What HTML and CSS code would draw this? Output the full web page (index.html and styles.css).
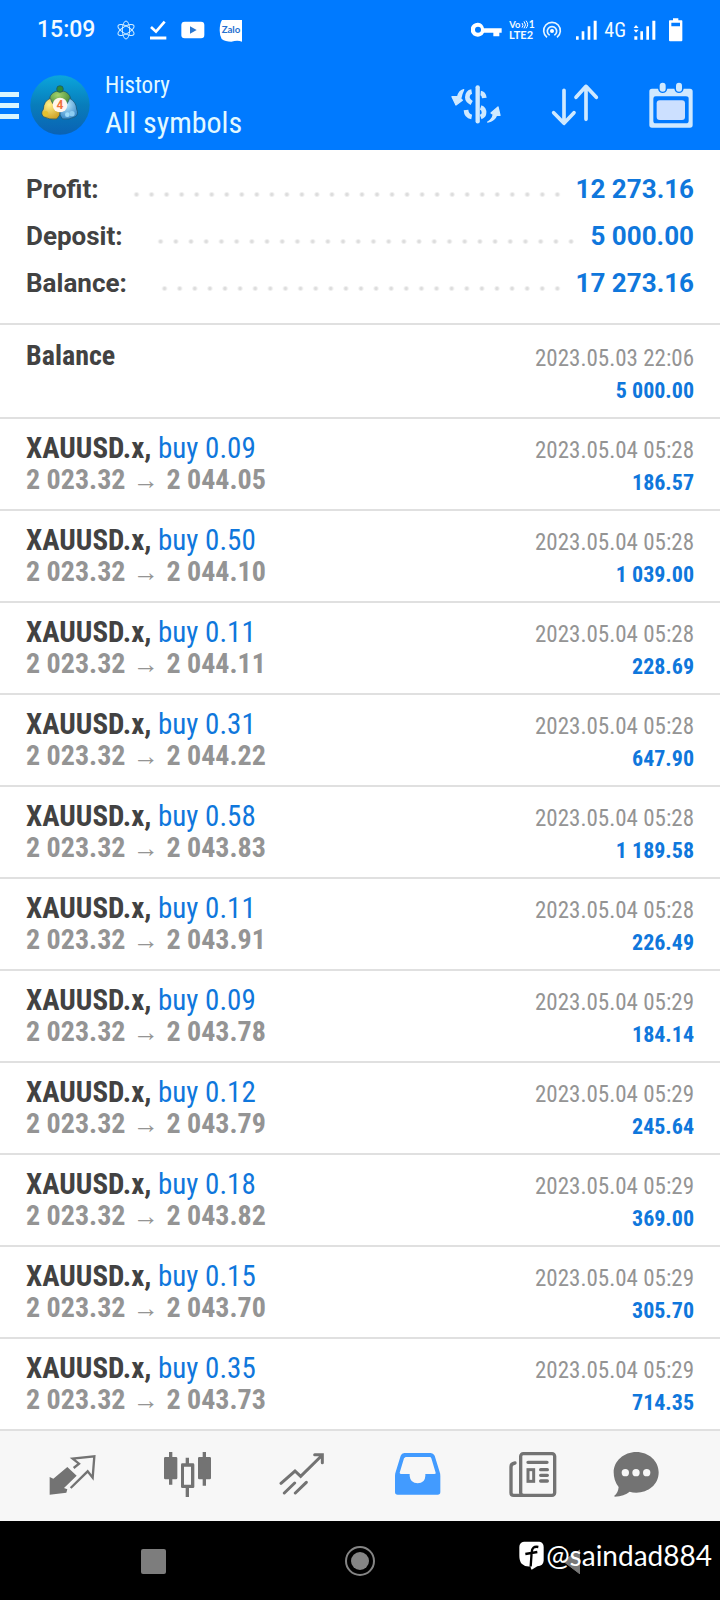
FILE: index.html
```html
<!DOCTYPE html>
<html lang="en">
<head>
<meta charset="utf-8">
<meta name="viewport" content="width=device-width, initial-scale=1">
<title>History</title>
<link rel="stylesheet" href="styles.css">
</head>
<body>
<div class="screen">
  <div class="status">
    <span class="clock">15:09</span>
    <div class="notices">
      <svg width="18" height="20" viewBox="351 58 54 60" fill="none" stroke="#d4efff" stroke-width="3"><ellipse cx="378" cy="88" rx="11" ry="27"/><ellipse cx="378" cy="88" rx="11" ry="27" transform="rotate(60 378 88)"/><ellipse cx="378" cy="88" rx="11" ry="27" transform="rotate(120 378 88)"/></svg>
      <svg width="18" height="20" viewBox="455 58 54 60" fill="none" stroke="#fff"><path d="M461 79L476 93L502 63" stroke-width="8"/><path d="M458 112H507" stroke-width="9"/></svg>
      <svg width="24" height="18" viewBox="551 61 72 54"><rect x="552" y="63" width="69" height="50" rx="10" fill="#fff"/><path d="M578 77L598 88L578 99Z" fill="#2b78d0"/></svg>
      <svg width="24" height="23" viewBox="659 52 72 69"><path d="M668 55H728V120Q715 114 696 120Q678 120 667 112Q661 103 661 86Q661 66 668 55Z" fill="#fff"/><text x="695" y="95" font-size="29" text-anchor="middle" class="zalo">Zalo</text></svg>
    </div>
    <div class="signals">
      <svg width="31" height="16" viewBox="127 66 93 48"><path fill="#fff" fill-rule="evenodd" d="M148 68a21 21 0 1 0 18 30H194V109H212V98H219V85H166A21 21 0 0 0 148 68ZM148 80a9 9 0 1 1 0 18a9 9 0 0 1 0-18Z"/></svg>
      <svg width="26" height="22" viewBox="241 56 78 66" class="volte"><text x="242" y="83" font-size="28">Vo</text><text x="300" y="83" font-size="31">1</text><text x="241" y="117" font-size="33">LTE2</text><path d="M280 68q6 7 0 14M286 63q9 11 0 21M292 61q10 12 0 23" fill="none" stroke="#fff" stroke-width="3"/></svg>
      <svg width="20" height="20" viewBox="338 60 60 60" fill="none" stroke="#e6f5ff" stroke-width="5"><circle cx="368" cy="93" r="6" fill="#fff" stroke="none"/><path d="M361 106a14 14 0 1 1 14 0M353 112a25 25 0 1 1 30 0"/></svg>
      <svg class="bars" width="22" height="21" viewBox="439 58 66 63" fill="#fff"><path d="M442 107h8v10h-8zM459 92h8v25h-8zM477 77h8v40h-8zM495 60h9v57h-9z"/></svg>
      <span class="net">4G</span>
      <svg width="23" height="21" viewBox="611 58 69 63" fill="#fff"><path d="M615 107h9v10h-9zM633 92h8v25h-8zM651 77h8v40h-8zM669 60h9v57h-9zM613 82l7-9 8 9zM613 87l7 9 8-9z"/></svg>
      <svg class="battery" width="15" height="24" viewBox="714 53 45 72"><path fill="#fff" fill-rule="evenodd" d="M729 54h16v6h10q2 0 2 2v58q0 3-3 3h-34q-3 0-3-3v-58q0-2 2-2h10zM724 67v11h26v-11z"/></svg>
    </div>
  </div>

  <header class="bar">
    <button class="menu" aria-label="Menu"><span></span><span></span><span></span></button>
    <svg class="logo" width="60" height="62" viewBox="90 222 180 186">
      <defs>
        <linearGradient id="disc" x1="0" y1="0" x2="0" y2="1"><stop offset="0" stop-color="#0ba6dc"/><stop offset=".5" stop-color="#087dbb"/><stop offset="1" stop-color="#0a62b4"/></linearGradient>
        <radialGradient id="green" cx=".4" cy=".3" r=".8"><stop offset="0" stop-color="#a5d36c"/><stop offset="1" stop-color="#2f7a30"/></radialGradient>
        <radialGradient id="gold" cx=".4" cy=".3" r=".8"><stop offset="0" stop-color="#fff08a"/><stop offset="1" stop-color="#c99a1c"/></radialGradient>
        <radialGradient id="blue" cx=".4" cy=".3" r=".8"><stop offset="0" stop-color="#b6e6fb"/><stop offset="1" stop-color="#2b7fc4"/></radialGradient>
      </defs>
      <circle cx="180" cy="315" r="89" fill="url(#disc)"/>
      <g stroke="#17506a" stroke-width="2">
        <path d="M148 308Q146 283 165 275Q180 268 196 275Q214 283 213 308Q196 318 180 318Q163 318 148 308Z" fill="url(#green)"/>
        <path d="M151 295Q131 303 130 328Q120 340 130 350Q148 360 170 357Q184 346 180 330Q158 318 151 295Z" fill="url(#gold)"/>
        <path d="M209 295Q229 306 230 328Q237 343 226 350Q208 360 187 357Q176 346 181 331Q200 320 209 295Z" fill="url(#blue)"/>
        <circle cx="180" cy="267" r="10" fill="#2f8a38"/>
      </g>
      <circle cx="137" cy="341" r="8" fill="#e5c22e"/>
      <circle cx="202" cy="344" r="7" fill="#9fdcfa"/>
      <circle cx="216" cy="341" r="8" fill="#8ccdf2"/>
      <circle cx="180" cy="315" r="22" fill="#fff5ee"/>
      <text x="180" y="328" text-anchor="middle" font-size="36" class="four">4</text>
    </svg>
    <div class="titles">
      <div class="sub">History</div>
      <h1>All symbols</h1>
    </div>
    <div class="actions">
      <button aria-label="Symbols"><svg width="52" height="44" viewBox="64 248 156 132" fill="none" stroke="#cfe9ff"><path d="M147 261V363" stroke-width="13" stroke-linecap="round"/><path d="M129 274Q117 276 116 291Q116 301 129 308M156 278Q165 279 167 293M112 329Q113 347 129 350M156 321Q167 325 166 338Q166 346 156 350" stroke-width="14"/><path d="M105 268C94 271 89 280 87 289L70 289L82 314L101 300L96 295Q98 282 105 268ZM177 365Q191 358 194 342L187 338L208 320L214 345L204 344Q198 361 177 365Z" fill="#cfe9ff" stroke-width="4" stroke-linejoin="round"/></svg></button>
      <button aria-label="Sort"><svg width="52" height="44" viewBox="354 248 156 132" fill="none" stroke="#cfe9ff" stroke-width="11" stroke-linecap="round" stroke-linejoin="round"><path d="M399 270V369M368 337L399 369L429 337M465 357V258M435 291L465 258L496 291"/></svg></button>
      <button aria-label="Period"><svg width="46" height="46" viewBox="655 244 138 138"><path fill="#cfe9ff" fill-rule="evenodd" d="M667 264H685Q688 277 699 277Q710 277 713 264H734Q737 277 748 277Q759 277 762 264H781Q789 264 789 272V373Q789 381 781 381H667Q659 381 659 373V272Q659 264 667 264ZM678 287Q671 287 671 294V360Q671 368 678 368H769Q777 368 777 360V294Q777 287 769 287Z"/><rect x="690" y="246" width="18" height="27" rx="9" fill="#cfe9ff"/><rect x="739" y="246" width="18" height="27" rx="9" fill="#cfe9ff"/><rect x="681" y="299" width="85" height="59" rx="9" fill="#cce0ff"/></svg></button>
    </div>
  </header>

  <main class="content">
    <dl class="summary">
      <div class="total"><dt>Profit:</dt><dd>12 273.16</dd></div>
      <div class="total"><dt>Deposit:</dt><dd>5 000.00</dd></div>
      <div class="total"><dt>Balance:</dt><dd>17 273.16</dd></div>
    </dl>
    <ul class="deals">
      <li class="deal opening"><div><div class="name">Balance</div></div><div class="side"><time>2023.05.03 22:06</time><div class="gain">5 000.00</div></div></li>
      <li class="deal"><div><div class="name">XAUUSD.x, <span class="buy">buy 0.09</span></div><div class="prices">2 023.32 <span class="arrow">→</span> 2 044.05</div></div><div class="side"><time>2023.05.04 05:28</time><div class="gain">186.57</div></div></li>
      <li class="deal"><div><div class="name">XAUUSD.x, <span class="buy">buy 0.50</span></div><div class="prices">2 023.32 <span class="arrow">→</span> 2 044.10</div></div><div class="side"><time>2023.05.04 05:28</time><div class="gain">1 039.00</div></div></li>
      <li class="deal"><div><div class="name">XAUUSD.x, <span class="buy">buy 0.11</span></div><div class="prices">2 023.32 <span class="arrow">→</span> 2 044.11</div></div><div class="side"><time>2023.05.04 05:28</time><div class="gain">228.69</div></div></li>
      <li class="deal"><div><div class="name">XAUUSD.x, <span class="buy">buy 0.31</span></div><div class="prices">2 023.32 <span class="arrow">→</span> 2 044.22</div></div><div class="side"><time>2023.05.04 05:28</time><div class="gain">647.90</div></div></li>
      <li class="deal"><div><div class="name">XAUUSD.x, <span class="buy">buy 0.58</span></div><div class="prices">2 023.32 <span class="arrow">→</span> 2 043.83</div></div><div class="side"><time>2023.05.04 05:28</time><div class="gain">1 189.58</div></div></li>
      <li class="deal"><div><div class="name">XAUUSD.x, <span class="buy">buy 0.11</span></div><div class="prices">2 023.32 <span class="arrow">→</span> 2 043.91</div></div><div class="side"><time>2023.05.04 05:28</time><div class="gain">226.49</div></div></li>
      <li class="deal"><div><div class="name">XAUUSD.x, <span class="buy">buy 0.09</span></div><div class="prices">2 023.32 <span class="arrow">→</span> 2 043.78</div></div><div class="side"><time>2023.05.04 05:29</time><div class="gain">184.14</div></div></li>
      <li class="deal"><div><div class="name">XAUUSD.x, <span class="buy">buy 0.12</span></div><div class="prices">2 023.32 <span class="arrow">→</span> 2 043.79</div></div><div class="side"><time>2023.05.04 05:29</time><div class="gain">245.64</div></div></li>
      <li class="deal"><div><div class="name">XAUUSD.x, <span class="buy">buy 0.18</span></div><div class="prices">2 023.32 <span class="arrow">→</span> 2 043.82</div></div><div class="side"><time>2023.05.04 05:29</time><div class="gain">369.00</div></div></li>
      <li class="deal"><div><div class="name">XAUUSD.x, <span class="buy">buy 0.15</span></div><div class="prices">2 023.32 <span class="arrow">→</span> 2 043.70</div></div><div class="side"><time>2023.05.04 05:29</time><div class="gain">305.70</div></div></li>
      <li class="deal"><div><div class="name">XAUUSD.x, <span class="buy">buy 0.35</span></div><div class="prices">2 023.32 <span class="arrow">→</span> 2 043.73</div></div><div class="side"><time>2023.05.04 05:29</time><div class="gain">714.35</div></div></li>
    </ul>
  </main>

  <nav class="tabs">
    <button aria-label="Quotes"><svg width="48" height="48" viewBox="148 96 144 144"><path d="M150 224V171L161 176L203 141L231 167L193 204L203 208L200 218Z" fill="#737373"/><path d="M222 144L238 131L219 116L284 109L279 173L264 154L213 204" fill="none" stroke="#737373" stroke-width="7"/></svg></button>
    <button aria-label="Charts"><svg width="48" height="48" viewBox="492 96 144 144" fill="#737373"><path d="M507 96h10v15h11q4 0 4 4v59q0 4-4 4h-11v16h-10v-16h-11q-4 0-4-4v-59q0-4 4-4h11zM608 96h10v15h11q4 0 4 4v59q0 4-4 4h-11v19h-10v-19h-10q-4 0-4-4v-59q0-4 4-4h10z"/><path fill-rule="evenodd" d="M557 113h10v17h12q4 0 4 4v66q0 4-4 4h-12v27h-10v-27h-10q-4 0-4-4v-66q0-4 4-4h10zM552 140v54h21v-54z"/></svg></button>
    <button aria-label="Trade"><svg width="48" height="48" viewBox="838 96 144 144" fill="none" stroke="#737373" stroke-width="9" stroke-linecap="round"><path d="M844 190L886 153L903 169L965 108M945 104H968V128M854 219L885 189M887 219L920 187"/></svg></button>
    <button aria-label="History" aria-current="page"><svg width="48" height="48" viewBox="102 96 144 144"><path fill="#429bff" fill-rule="evenodd" d="M133 99H212Q220 99 224 107L239 156Q241 161 241 168V216Q241 224 233 224H113Q105 224 105 216V168Q105 161 107 156L122 107Q125 99 133 99ZM137 111L132 115L119 158Q119 162 124 162H149V168Q151 190 173 190Q195 190 196 168V162H223Q228 162 227 158L214 115Q213 111 209 111Z"/></svg></button>
    <button aria-label="News"><svg width="48" height="48" viewBox="448 94 144 144" fill="none" stroke="#737373" stroke-width="10"><rect x="483" y="99" width="102" height="125" rx="8"/><path d="M466 127Q454 129 454 138V216Q454 224 462 224H490" stroke-linecap="round"/><path d="M505 125H562M543 147H563M543 164H563M543 181H563" stroke-linecap="round"/><rect x="505" y="147" width="17" height="35" stroke-width="9"/></svg></button>
    <button aria-label="Messages"><svg width="48" height="48" viewBox="756 96 144 144"><path d="M829 96C866 96 896 123 896 157C896 194 865 218 829 218Q818 218 809 215Q793 228 764 230Q763 229 763 227Q774 220 776 201Q761 183 761 157C761 123 792 96 829 96Z" fill="#737373"/><g fill="#f7f7f7"><circle cx="796" cy="158" r="11"/><circle cx="828" cy="158" r="11"/><circle cx="860" cy="158" r="11"/></g></svg></button>
  </nav>

  <footer class="system">
    <button aria-label="Recent apps"><svg width="26" height="26" viewBox="0 0 26 26"><rect x="1" y="1" width="25" height="25" rx="2" fill="#7d7d7d"/></svg></button>
    <button aria-label="Home"><svg width="32" height="32" viewBox="0 0 32 32"><circle cx="16" cy="16" r="14" fill="none" stroke="#858585" stroke-width="2"/><circle cx="16" cy="16" r="9" fill="#858585"/></svg></button>
    <button aria-label="Back"><svg width="26" height="26" viewBox="0 0 26 26"><path d="M9 13L26 2V26Z" fill="#777" stroke="#777" stroke-linejoin="round"/></svg></button>
    <div class="credit">
      <svg width="26" height="30" viewBox="469 367 78 90"><path d="M484 372H530Q543 374 543 388V429Q542 444 524 446L507 456Q503 454 504 446Q487 448 477 438Q470 430 470 414V388Q470 374 484 372Z" fill="#fff"/><path d="M527 388Q508 384 507 404L504 446M488 409L524 403" fill="none" stroke="#000" stroke-width="7"/></svg>
      <span>@saindad884</span>
    </div>
  </footer>
</div>
</body>
</html>
```
FILE: styles.css
```css
* { box-sizing: border-box; }

body {
  margin: 0;
  background: #fff;
  color: #424242;
  font-family: "Roboto Condensed", Roboto, sans-serif;
}

button {
  display: flex;
  align-items: center;
  justify-content: center;
  margin: 0;
  padding: 0;
  border: 0;
  background: none;
}

svg { display: block; flex: none; }

.screen {
  display: flex;
  flex-direction: column;
  min-height: 100vh;
}

/* phone status bar */
.status {
  display: flex;
  justify-content: space-between;
  align-items: center;
  height: 60px;
  padding: 0 37px;
  background: #007aff;
  color: #f4fbff;
}

.clock {
  margin-right: 22px;
  font: 500 23px/28px Roboto, sans-serif;
}

.notices {
  display: flex;
  align-items: center;
  gap: 14px;
  margin-right: auto;
}

.signals {
  display: flex;
  align-items: center;
  gap: 7px;
}

.bars { margin-left: 6px; }
.battery { margin-left: 5px; }

.net { font: 400 20px/24px "Roboto Condensed", Roboto, sans-serif; }
.zalo { font-family: Lato, sans-serif; font-weight: 700; fill: #2670cf; }
.volte { fill: #f4fbff; font-family: Lato, sans-serif; font-weight: 700; }

/* app bar */
.bar {
  display: flex;
  align-items: center;
  height: 90px;
  padding-right: 26px;
  background: #007aff;
  color: #e2f9ff;
}

.menu {
  flex-direction: column;
  align-items: stretch;
  gap: 6px;
  width: 19px;
}

.menu span { height: 5px; background: #d9f5ff; }

.logo { margin-left: 11px; }
.four { fill: #f0713a; font-family: Roboto, sans-serif; font-weight: 700; }

.titles {
  margin: 0 auto 0 15px;
  padding-top: 4px;
}

.sub { font-size: 23px; line-height: 32px; }

h1 {
  margin: 0;
  font-size: 30px;
  font-weight: 400;
  line-height: 42px;
}

.actions {
  display: flex;
  align-items: center;
  gap: 47px;
}

/* totals */
.content { flex: 1; }

.summary {
  margin: 0;
  padding: 16px 26px;
  border-bottom: 2px solid #e0e0e0;
  font: 700 26px/47px Roboto, sans-serif;
}

.total {
  display: flex;
  align-items: center;
}

.total::before {
  content: "";
  order: 1;
  flex: 1;
  height: 5px;
  margin: 9px 11px 0 30px;
  background: radial-gradient(circle, #dcdcdc 1px, transparent 3px) 0 0 / 15px 5px round;
}

.total dt { order: 0; }
.total dd { order: 2; margin: 0; color: #0f77dc; }

/* deal list */
.deals {
  margin: 0;
  padding: 0;
  list-style: none;
}

.deal {
  display: flex;
  justify-content: space-between;
  padding: 13px 26px 10px;
  border-bottom: 2px solid #e0e0e0;
}

.opening { padding-top: 15px; }

.name, .prices {
  font-size: 28px;
  font-weight: 700;
  line-height: 32px;
}

.name { font-size: 29px; }
.opening .name { font-size: 28px; }

.name .buy { color: #0f77dc; font-weight: 400; }

.prices { color: #949494; }

.arrow {
  margin: 0 1px;
  font: 400 26px/20px "Liberation Sans", sans-serif;
}

.side {
  padding-top: 3px;
  color: #949494;
  font-size: 23px;
  line-height: 32px;
  text-align: right;
}

.gain {
  color: #0f77dc;
  font-size: 22px;
  font-weight: 700;
}

/* tabs */
.tabs {
  display: grid;
  grid-template-columns: repeat(5, 5fr) 4fr;
  height: 90px;
  padding: 0 38px 0 15px;
  background: #f7f7f7;
}

/* system keys */
.system {
  position: relative;
  display: grid;
  grid-template-columns: repeat(3, 1fr);
  height: 79px;
  padding: 0 50px;
  background: #000;
}

.credit {
  position: absolute;
  right: 8px;
  bottom: 26px;
  display: flex;
  align-items: center;
  gap: 1px;
  color: #fff;
  font: 400 28px/38px Lato, sans-serif;
}
```
